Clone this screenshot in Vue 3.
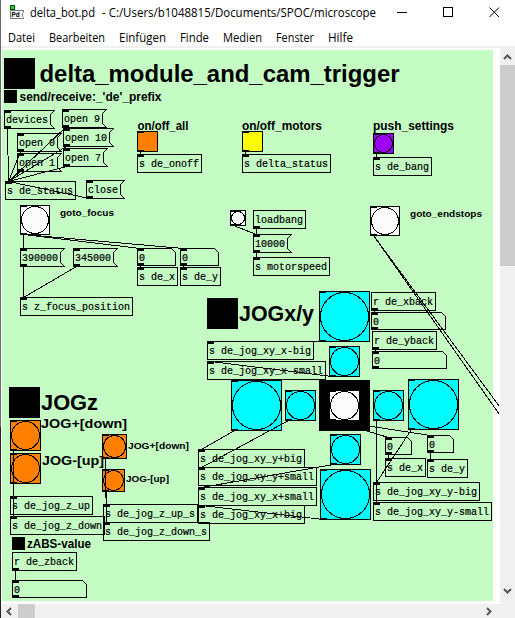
<script setup>
const menus = [
  ['Datei', 27], ['Bearbeiten', 56], ['Einfügen', 47], ['Finde', 29],
  ['Medien', 39], ['Fenster', 38], ['Hilfe', 25],
]

// kind, left, top, right, bottom, text
const boxes = [
  ['msg', 4, 110, 54, 128, 'devices'],
  ['msg', 62, 109, 106, 127, 'open 9'],
  ['msg', 63, 128, 113, 146, 'open 10'],
  ['msg', 17, 133, 61, 151, 'open 0'],
  ['msg', 17, 153, 61, 171, 'open 1'],
  ['msg', 63, 148, 107, 166, 'open 7'],
  ['send', 5, 181, 75, 199, 's de_status'],
  ['msg', 86, 180, 124, 198, 'close'],
  ['send', 137, 154, 201, 172, 's de_onoff'],
  ['send', 242, 154, 330, 172, 's delta_status'],
  ['send', 373, 157, 431, 175, 's de_bang'],
  ['msg', 20, 248, 64, 266, '390000'],
  ['msg', 73, 248, 117, 266, '345000'],
  ['send', 20, 297, 132, 315, 's z_focus_position'],
  ['num', 137, 248, 175, 265, '0'],
  ['num', 180, 248, 218, 265, '0'],
  ['send', 137, 267, 177, 285, 's de_x'],
  ['send', 180, 267, 220, 285, 's de_y'],
  ['recv', 253, 210, 305, 228, 'loadbang'],
  ['msg', 253, 234, 291, 252, '10000'],
  ['send', 253, 257, 329, 275, 's motorspeed'],
  ['send', 207, 341, 313, 359, 's de_jog_xy_x-big'],
  ['send', 207, 361, 325, 379, 's de_jog_xy_x-small'],
  ['recv', 371, 292, 435, 310, 'r de_xback'],
  ['num', 371, 312, 445, 329, '0'],
  ['recv', 372, 331, 436, 349, 'r de_yback'],
  ['num', 372, 351, 446, 368, '0'],
  ['send', 198, 449, 304, 467, 's de_jog_xy_y+big'],
  ['send', 198, 467, 316, 485, 's de_jog_xy_y+small'],
  ['send', 198, 487, 316, 505, 's de_jog_xy_x+small'],
  ['send', 198, 505, 304, 523, 's de_jog_xy_x+big'],
  ['num', 385, 437, 411, 454, '0'],
  ['send', 385, 458, 425, 476, 's de_x'],
  ['num', 427, 435, 453, 452, '0'],
  ['send', 427, 459, 467, 477, 's de_y'],
  ['send', 373, 482, 479, 500, 's de_jog_xy_y-big'],
  ['send', 373, 502, 491, 520, 's de_jog_xy_y-small'],
  ['send', 10, 496, 92, 514, 's de_jog_z_up'],
  ['send', 10, 516, 104, 534, 's de_jog_z_down'],
  ['send', 103, 504, 197, 522, 's de_jog_z_up_s'],
  ['send', 103, 522, 209, 540, 's de_jog_z_down_s'],
  ['recv', 12, 552, 76, 570, 'r de_zback'],
  ['num', 12, 580, 86, 597, '0'],
].map(([kind, l, t, r, b, text]) => ({ kind, l, t, r, b, text }))

// left, top, size, colour, round
const pads = [
  [137, 131, 20, '#ff8000', false],
  [242, 131, 20, '#fcfc00', false],
  [373, 133, 20, '#9c00fc', true],
  [20, 205, 29, '#fcfcfc', true],
  [230, 210, 15, '#fcfcfc', true],
  [370, 206, 29, '#fcfcfc', true],
  [319, 291, 50, '#00fcfc', true],
  [329, 346, 30, '#00fcfc', true],
  [231, 380, 50, '#00fcfc', true],
  [285, 390, 30, '#00fcfc', true],
  [319, 380, 50, '#000000', false],
  [329, 390, 30, '#fcfcfc', true],
  [373, 390, 30, '#00fcfc', true],
  [408, 379, 50, '#00fcfc', true],
  [330, 434, 30, '#00fcfc', true],
  [320, 469, 50, '#00fcfc', true],
  [10, 420, 30, '#ff8000', true],
  [10, 453, 30, '#ff8000', true],
  [102, 434, 24, '#ff8000', true],
  [102, 469, 22, '#ff8000', true],
].map(([x, y, s, fill, round]) => ({ x, y, s, fill, round }))

const blocks = [
  [4, 58, 31], [4, 90, 13], [207, 298, 31], [9, 387, 31], [12, 537, 13],
]

// x, baseline, width, font size, text
const labels = [
  [39.5, 82, 360, 23.5, 'delta_module_and_cam_trigger'],
  [19.5, 101, 142, 12, "send/receive:_'de'_prefix"],
  [137.5, 130, 51, 12, 'on/off_all'],
  [242, 130, 80, 12, 'on/off_motors'],
  [373, 130, 81, 12, 'push_settings'],
  [60, 216, 54, 9.5, 'goto_focus'],
  [410, 217, 72, 9.5, 'goto_endstops'],
  [239, 321, 75, 22, 'JOGx/y'],
  [41, 410, 57, 22, 'JOGz'],
  [41, 428, 86, 13.5, 'JOG+[down]'],
  [42, 465, 62, 13.5, 'JOG-[up]'],
  [128, 449, 61, 9.5, 'JOG+[down]'],
  [126, 482, 43, 9.5, 'JOG-[up]'],
  [27, 548, 64, 12, 'zABS-value'],
]

const wires = [
  [7, 128, 8, 181], [65, 127, 8, 181], [66, 146, 8, 181], [20, 151, 8, 181],
  [20, 171, 8, 181], [66, 166, 8, 181], [89, 198, 8, 181],
  [140, 151, 140, 155], [245, 151, 245, 155], [376, 153, 376, 158],
  [23, 234, 23, 248], [23, 234, 140, 248], [23, 234, 183, 248],
  [23, 266, 23, 297], [76, 266, 23, 297],
  [140, 265, 140, 268], [183, 265, 183, 268],
  [256, 228, 256, 234], [256, 252, 256, 257], [233, 225, 256, 234],
  [373, 235, 499, 406], [373, 235, 499, 414],
  [374, 310, 374, 312], [375, 349, 375, 351],
  [322, 341, 210, 341], [332, 376, 210, 361],
  [234, 430, 201, 449], [288, 420, 201, 467],
  [333, 464, 201, 487], [323, 519, 201, 505],
  [376, 420, 376, 502], [411, 429, 376, 482],
  [332, 420, 388, 437], [332, 420, 430, 435],
  [388, 454, 388, 458], [430, 452, 430, 459],
  [13, 450, 13, 516], [13, 483, 13, 496],
  [105, 458, 106, 522], [105, 491, 106, 504],
  [15, 570, 15, 580],
]

function outline({ kind, l, t, r, b }) {
  if (kind === 'msg') return `M${l} ${t}H${r}L${r - 4} ${t + 4}V${b - 4}L${r} ${b}H${l}Z`
  if (kind === 'num') return `M${l} ${t}H${r - 4}L${r} ${t + 4}V${b}H${l}Z`
  return `M${l} ${t}H${r}V${b}H${l}Z`
}
</script>

<template>
  <div class="window">
    <header class="titlebar">
      <svg class="app-icon" width="15" height="15" viewBox="0 0 15 15">
        <path d="M.5 5.5H13.5V7.500L12.500 8.500V11.500L13.500 12.500V13.500H.5Z" fill="#f4f4f4" stroke="#777" />
        <rect x="0" y="0" width="5" height="5" fill="#084808" />
        <rect x="1" y="1" width="3" height="3" fill="#10e010" />
        <text x="1.500" y="12" class="icon-text">Pd</text>
      </svg>
      <svg class="title" width="350" height="24">
        <text x="0" y="17" textLength="65" lengthAdjust="spacingAndGlyphs">delta_bot.pd</text>
        <text x="72" y="17" textLength="274" lengthAdjust="spacingAndGlyphs">- C:/Users/b1048815/Documents/SPOC/microscope</text>
      </svg>
      <div class="controls">
        <svg width="11" height="11"><path d="M0 5.500H10" /></svg>
        <svg width="11" height="11"><path d="M.5 .5H9.500V9.500H.5Z" /></svg>
        <svg width="11" height="11"><path class="cross" d="M.5 .5L10 10M10 .5L.5 10" /></svg>
      </div>
    </header>

    <nav class="menubar">
      <svg v-for="[name, w] in menus" :key="name" :width="w + 4" height="22">
        <text x="0" y="18" :textLength="w" lengthAdjust="spacingAndGlyphs">{{ name }}</text>
      </svg>
    </nav>

    <main class="workspace">
      <svg class="patch" width="499" height="556" viewBox="1 48 499 556">
        <rect x="2" y="50" width="491" height="551" fill="#c4fcc4" />
        <rect v-for="([x, y, s], i) in blocks" :key="'k' + i" :x="x" :y="y" :width="s" :height="s" />

        <g v-for="(p, i) in pads" :key="'p' + i">
          <rect class="line" :x="p.x + 0.5" :y="p.y + 0.5" :width="p.s" :height="p.s" :style="{ fill: p.fill }" />
          <circle v-if="p.round" class="line" :cx="p.x + p.s / 2 + 0.5" :cy="p.y + p.s / 2 + 0.5" :r="p.s / 2 - 1" />
          <rect :x="p.x" :y="p.y" width="7" height="2" />
          <rect :x="p.x" :y="p.y + p.s - 1" width="7" height="2" />
        </g>

        <g v-for="(b, i) in boxes" :key="'b' + i">
          <path class="line" :d="outline(b)" transform="translate(.5 .5)" />
          <rect v-if="b.kind !== 'recv'" :x="b.l" :y="b.t" width="7" height="3" />
          <rect v-if="b.kind !== 'send'" :x="b.l" :y="b.b - 2" width="7" height="3" />
          <text class="atom" :x="b.l + 2" :y="b.t + 13">{{ b.text }}</text>
        </g>

        <text
          v-for="([x, y, w, size, text], i) in labels" :key="'l' + i"
          class="label" :x="x" :y="y" :font-size="size" :textLength="w" lengthAdjust="spacingAndGlyphs"
        >{{ text }}</text>

        <g transform="translate(.5 .5)">
          <path v-for="([x1, y1, x2, y2], i) in wires" :key="'w' + i" class="line" :d="`M${x1} ${y1}L${x2} ${y2}`" />
        </g>
      </svg>

      <aside class="vbar">
        <svg width="15" height="17"><path d="M4 11L7.500 7.500L11 11" /></svg>
        <div class="vthumb"></div>
        <svg width="15" height="17"><path d="M4 6L7.500 9.500L11 6" /></svg>
      </aside>
    </main>

    <footer class="hbar">
      <svg width="17" height="14"><path d="M10 4L6.500 7.500L10 11" /></svg>
      <div class="hthumb"></div>
      <svg width="17" height="14"><path d="M6 4L9.500 7.500L6 11" /></svg>
    </footer>
  </div>
</template>

<style>
body {
  margin: 0;
  overflow: hidden;
}
</style>

<style scoped>
.window {
  box-sizing: border-box;
  width: 515px;
  height: 618px;
  display: flex;
  flex-direction: column;
  background: #fff;
  border-left: 1px solid;
  border-image: linear-gradient(#696969 69%, #242424 69%) 1;
}
svg {
  display: block;
  flex: none;
  overflow: visible;
}
.titlebar {
  height: 24px;
  display: flex;
  padding-left: 9px;
}
.app-icon {
  margin-top: 5px;
}
.icon-text {
  font: bold 6.5px "Liberation Sans", sans-serif;
}
.title {
  margin-left: 5px;
}
.title text,
.menubar text {
  font-family: "Open Sans", "Noto Sans", sans-serif;
  font-size: 12px;
  fill: #000;
}
.controls {
  display: flex;
  gap: 35px;
  margin: 7px 0 0 17px;
}
.controls path {
  fill: none;
  stroke: #000;
  shape-rendering: crispEdges;
}
.controls .cross {
  shape-rendering: auto;
}
.menubar {
  height: 22px;
  display: flex;
  gap: 10px;
  padding-left: 7px;
  border-bottom: 2px solid #f0f0f0;
}
.workspace {
  display: flex;
  height: 556px;
}
.patch rect,
.line {
  shape-rendering: crispEdges;
}
.line {
  fill: none;
  stroke: #000;
  stroke-width: 1;
}
.atom {
  font-family: "Liberation Mono", monospace;
  font-size: 10px;
  stroke: #000;
  stroke-width: 0.2px;
  white-space: pre;
}
.label {
  font-family: "Liberation Sans", Arial, sans-serif;
  font-weight: bold;
}
.vbar {
  width: 15px;
  height: 556px;
  background: #f0f0f0;
  display: flex;
  flex-direction: column;
}
.vthumb {
  height: 201px;
  margin-bottom: 317px;
  background: #cdcdcd;
}
.hbar {
  height: 14px;
  display: flex;
  background: #f0f0f0;
}
.hthumb {
  width: 17px;
  margin-right: 446px;
  background: #cdcdcd;
}
.vbar path,
.hbar path {
  fill: none;
  stroke: #555;
  stroke-width: 2;
}
</style>
